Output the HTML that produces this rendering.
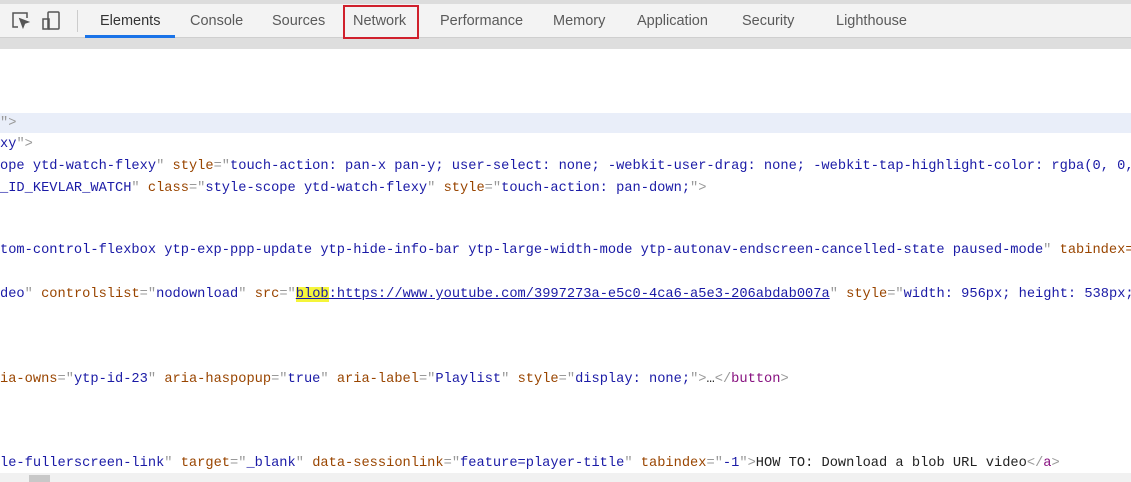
<!DOCTYPE html>
<html><head><meta charset="utf-8"><style>
body{margin:0;width:1131px;height:482px;overflow:hidden;background:#fff;position:relative;font-family:"Liberation Sans",sans-serif}
.top{position:absolute;left:0;top:0;width:1131px;height:4px;background:#dcdcdc}
.bar{position:absolute;left:0;top:4px;width:1131px;height:33px;background:#f3f3f3;border-bottom:1px solid #cfcfcf}
.strip{position:absolute;left:0;top:38px;width:1131px;height:11px;background:#dedede}
.tab{position:absolute;top:13px;font-size:14.5px;color:#5a5a5a;white-space:nowrap}
.ul{position:absolute;left:85px;top:35px;width:90px;height:3px;background:#1a73e8}
.box{position:absolute;left:343px;top:5px;width:72px;height:30px;border:2px solid #d0202c}
.sep{position:absolute;left:77px;top:10px;width:1px;height:22px;background:#ccc}
.ln{position:absolute;left:0;font-family:"Liberation Mono",monospace;font-size:13.7px;white-space:pre;color:#222;line-height:16px}
.a{color:#994500}.v{color:#1a1aa6}.p{color:#999}.t{color:#881280}
.u{text-decoration:underline;color:#1a1aa6}
.hl{position:absolute;left:0;top:113px;width:1131px;height:20px;background:#e9eef9}
.sb{position:absolute;left:0;top:473px;width:1131px;height:9px;background:#f1f1f1}
.th{position:absolute;left:29px;top:475px;width:21px;height:7px;background:#c8c8c8}
</style></head><body>
<div class="top"></div><div class="bar"></div><div class="strip"></div>
<svg style="position:absolute;left:10px;top:10px" width="60" height="22" viewBox="0 0 60 22" fill="none" stroke="#555" stroke-width="1.5">
<path d="M8 17H3V3h14v5"/><path d="M10 9l8 3-3.5 1.2L13 17z" fill="#555"/>
<rect x="38" y="2" width="11" height="17" rx="1"/><rect x="33" y="9" width="6" height="10"/>
</svg>
<div class="sep"></div>
<div class="tab" style="left:100px;color:#333">Elements</div>
<div class="tab" style="left:190px">Console</div>
<div class="tab" style="left:272px">Sources</div>
<div class="tab" style="left:353px">Network</div>
<div class="tab" style="left:440px">Performance</div>
<div class="tab" style="left:553px">Memory</div>
<div class="tab" style="left:637px">Application</div>
<div class="tab" style="left:742px">Security</div>
<div class="tab" style="left:836px">Lighthouse</div>
<div class="ul"></div><div class="box"></div>
<div class="hl"></div>
<div class="ln" style="top:116px"><span class="p">"&gt;</span></div>
<div class="ln" style="top:137px"><span class="v">xy</span><span class="p">"&gt;</span></div>
<div class="ln" style="top:159px"><span class="v">ope ytd-watch-flexy</span><span class="p">"</span> <span class="a">style</span><span class="p">="</span><span class="v">touch-action: pan-x pan-y; user-select: none; -webkit-user-drag: none; -webkit-tap-highlight-color: rgba(0, 0,</span></div>
<div class="ln" style="top:181px"><span class="v">_ID_KEVLAR_WATCH</span><span class="p">"</span> <span class="a">class</span><span class="p">="</span><span class="v">style-scope ytd-watch-flexy</span><span class="p">"</span> <span class="a">style</span><span class="p">="</span><span class="v">touch-action: pan-down;</span><span class="p">"&gt;</span></div>
<div class="ln" style="top:243px"><span class="v">tom-control-flexbox ytp-exp-ppp-update ytp-hide-info-bar ytp-large-width-mode ytp-autonav-endscreen-cancelled-state paused-mode</span><span class="p">"</span> <span class="a">tabindex=</span></div>
<div class="ln" style="top:287px"><span class="v">deo</span><span class="p">"</span> <span class="a">controlslist</span><span class="p">="</span><span class="v">nodownload</span><span class="p">"</span> <span class="a">src</span><span class="p">="</span><span class="u" style="background:#f5f53a">blob</span><span class="u">:https://www.youtube.com/3997273a-e5c0-4ca6-a5e3-206abdab007a</span><span class="p">"</span> <span class="a">style</span><span class="p">="</span><span class="v">width: 956px; height: 538px;</span></div>
<div class="ln" style="top:372px"><span class="a">ia-owns</span><span class="p">="</span><span class="v">ytp-id-23</span><span class="p">"</span> <span class="a">aria-haspopup</span><span class="p">="</span><span class="v">true</span><span class="p">"</span> <span class="a">aria-label</span><span class="p">="</span><span class="v">Playlist</span><span class="p">"</span> <span class="a">style</span><span class="p">="</span><span class="v">display: none;</span><span class="p">"&gt;</span>…<span class="p">&lt;/</span><span class="t">button</span><span class="p">&gt;</span></div>
<div class="ln" style="top:456px"><span class="v">le-fullerscreen-link</span><span class="p">"</span> <span class="a">target</span><span class="p">="</span><span class="v">_blank</span><span class="p">"</span> <span class="a">data-sessionlink</span><span class="p">="</span><span class="v">feature=player-title</span><span class="p">"</span> <span class="a">tabindex</span><span class="p">="</span><span class="v">-1</span><span class="p">"&gt;</span>HOW TO: Download a blob URL video<span class="p">&lt;/</span><span class="t">a</span><span class="p">&gt;</span></div>
<div class="sb"></div><div class="th"></div>
</body></html>
